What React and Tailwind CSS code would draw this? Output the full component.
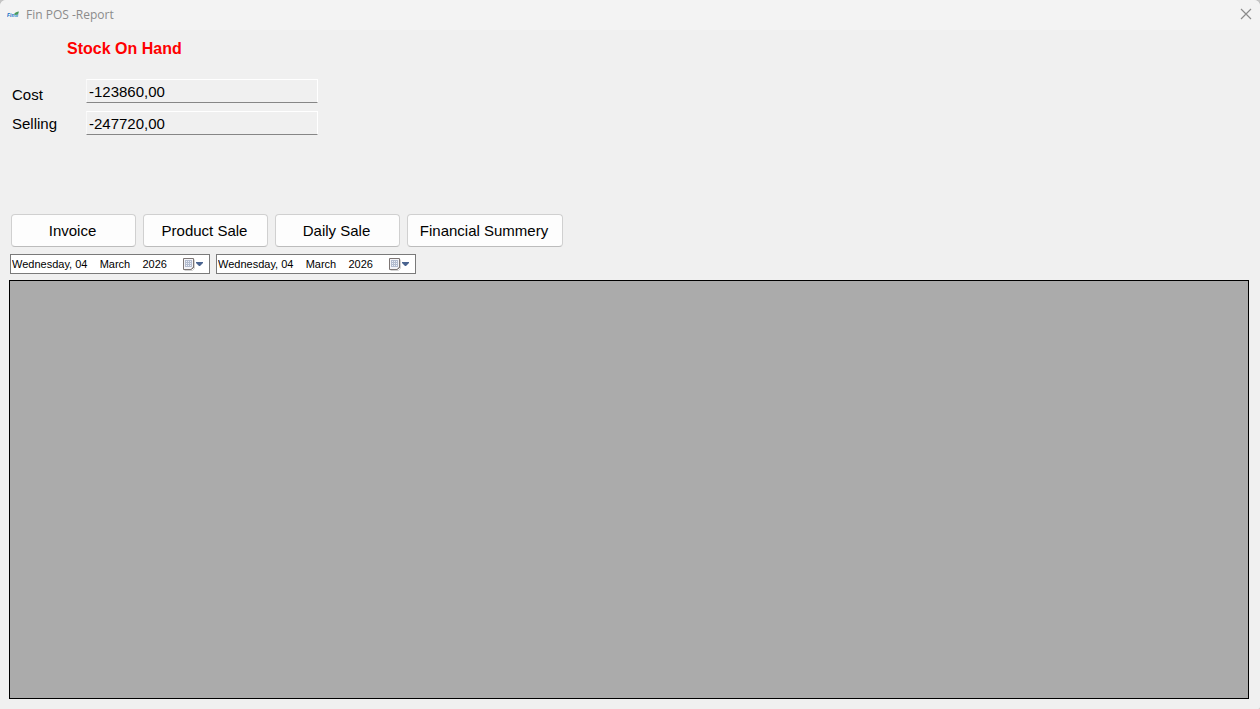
import React from 'react';

const reports = [
  { name: 'Invoice', className: 'w-[125px]' },
  { name: 'Product Sale', className: 'w-[125px]' },
  { name: 'Daily Sale', className: 'w-[125px]' },
  { name: 'Financial Summery', className: 'w-[156px]' },
];

const amounts = [
  { id: 'cost', label: 'Cost', value: '-123860,00' },
  { id: 'selling', label: 'Selling', value: '-247720,00' },
];

const Logo = () => (
  <svg width="12" height="8" viewBox="0 0 12 8" aria-hidden="true">
    <text x="0" y="6" fontSize="5" fontWeight="700" fontStyle="italic" fill="#0f6cc4">
      Fin
    </text>
    <path d="M8 6l0.500-2.500 3-1-0.500 3.500z" fill="#7fb2d8" />
    <path d="M7 3.200c1-1.700 3-2.700 5-2.700L11 3.200 8.500 4z" fill="#4a9a5c" />
  </svg>
);

const CalendarIcon = () => (
  <svg width="21" height="13" viewBox="0 0 21 13" aria-hidden="true">
    <path d="M1.500 12.500h8l2-2v-9" stroke="#d2d2d2" fill="none" />
    <path d="M0.500 0.500h10v9l-2 2h-8z" fill="#f4f4f8" stroke="#7d7675" />
    <path d="M2 2h7v7H2z" fill="#b3bccf" />
    <path
      d="M3 3h1v1H3zM5 3h1v1H5zM7 3h1v1H7zM3 5h1v1H3zM5 5h1v1H5zM7 5h1v1H7zM3 7h1v1H3zM5 7h1v1H5zM7 7h1v1H7z"
      fill="#eef1f8"
    />
    <path d="M8 11l3-3v1.500L9.500 11z" fill="#7d7675" />
    <path d="M13 4h7v1l-3 3h-1l-3-3z" fill="#4a6490" />
  </svg>
);

const DatePicker = ({ label }) => (
  <div className="flex h-5 w-[200px] items-center border border-[#7a7a7a] bg-white pr-[5px]">
    <input
      aria-label={label}
      defaultValue="Wednesday, 04    March    2026"
      className="min-w-0 flex-1 bg-transparent pl-px text-[11px] leading-4 outline-none"
    />
    <button type="button" aria-label={`Open ${label} calendar`} className="shrink-0">
      <CalendarIcon />
    </button>
  </div>
);

const App = () => {
  return (
    <div className="bg-[#c4c4c4]">
      <div className="flex min-h-screen flex-col overflow-hidden rounded-t-md rounded-br-xs bg-[#f0f0f0] font-['Liberation_Sans',Arial,sans-serif] text-[15px] text-black">
        <header className="flex h-[30px] items-center justify-between bg-[#f3f3f3] pr-2 pl-[7px]">
          <div className="flex items-center gap-[7px]">
            <Logo />
            <span className="font-['Open_Sans','Noto_Sans',sans-serif] text-xs text-[#8b8b8b]">Fin POS -Report</span>
          </div>
          <button type="button" aria-label="Close" className="pb-[2px]">
            <svg width="12" height="12" viewBox="0 0 12 12" className="block" aria-hidden="true">
              <path d="M1 1l10 10M11 1L1 11" stroke="#8b8b8b" strokeWidth="1.200" fill="none" />
            </svg>
          </button>
        </header>

        <main className="flex flex-1 flex-col pr-[11px] pb-[10px] pl-[9px]">
          <h1 className="mt-[7px] pl-[58px] text-base leading-6 font-bold text-[#ff0000]">Stock On Hand</h1>

          <div className="mt-[18px] flex pl-[3px]">
            <div className="flex w-[74px] flex-col gap-[5px] pt-1">
              {amounts.map((amount) => (
                <label key={amount.id} htmlFor={amount.id} className="leading-6">
                  {amount.label}
                </label>
              ))}
            </div>
            <div className="flex flex-col gap-2">
              {amounts.map((amount) => (
                <input
                  key={amount.id}
                  id={amount.id}
                  readOnly
                  defaultValue={amount.value}
                  className="h-6 w-[232px] border border-t-white border-r-white border-b-[#868686] border-l-[#f9f9f9] bg-[#f0f0f0] px-[2px] outline-none"
                />
              ))}
            </div>
          </div>

          <div className="mt-[78px] flex flex-wrap gap-[7px] pl-[2px]">
            {reports.map((report) => (
              <button
                key={report.name}
                type="button"
                className={`h-[33px] rounded-[4px] border border-[#d0d0d0] border-b-[#bcbcbc] bg-[#fdfdfd] pt-[2px] pr-[2px] ${report.className}`}
              >
                {report.name}
              </button>
            ))}
          </div>

          <div className="mt-[7px] flex flex-wrap gap-[6px] pl-px">
            <DatePicker label="From date" />
            <DatePicker label="To date" />
          </div>

          <section aria-label="Report results" className="mt-[6px] flex-1 border border-black bg-[#ababab]" />
        </main>
      </div>
    </div>
  );
};

export default App;
